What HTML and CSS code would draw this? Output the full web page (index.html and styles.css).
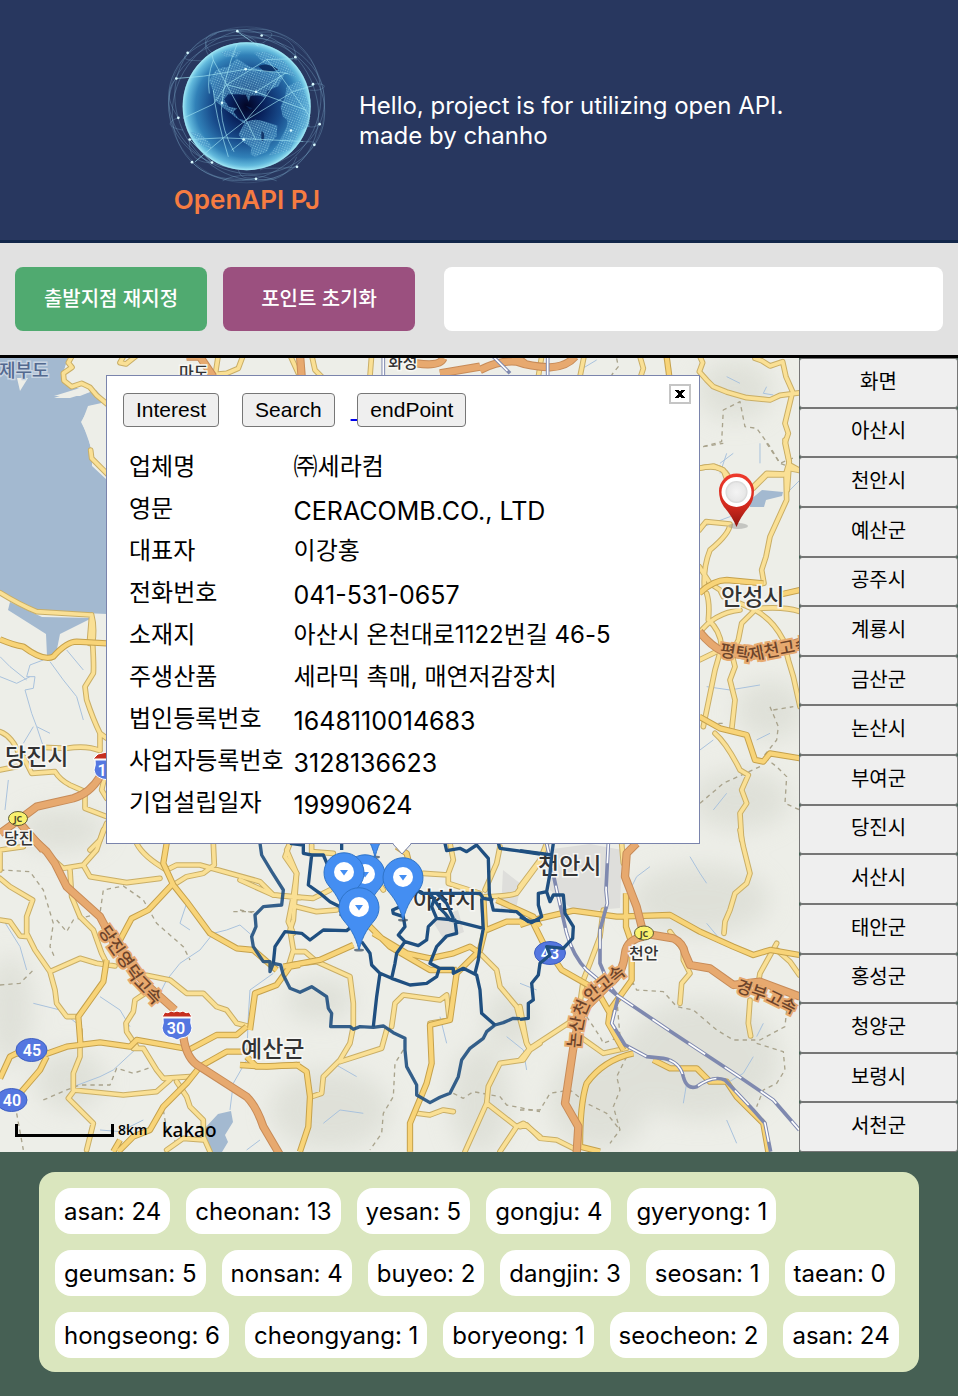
FILE: index.html
```html
<!DOCTYPE html>
<html lang="ko">
<head>
<meta charset="utf-8">
<meta name="viewport" content="width=device-width, initial-scale=1">
<title>OpenAPI PJ</title>
<link rel="stylesheet" href="styles.css">
</head>
<body>
<header class="hero">
  <div class="brand">
    <svg class="globe" viewBox="51 48 480 476" aria-hidden="true">
      <defs>
        <radialGradient id="ball" cx="0.5" cy="0.5" r="0.5">
          <stop offset="0" stop-color="#020423"/>
          <stop offset="0.25" stop-color="#08205a"/>
          <stop offset="0.55" stop-color="#184c8c"/>
          <stop offset="0.8" stop-color="#3181b8"/>
          <stop offset="0.93" stop-color="#62b9dc"/>
          <stop offset="1" stop-color="#9de4f3"/>
        </radialGradient>
        <pattern id="dots" width="7" height="7" patternUnits="userSpaceOnUse" patternTransform="rotate(20)">
          <rect width="7" height="7" fill="#4a96c8" fill-opacity="0.55"/>
          <circle cx="3" cy="3" r="1.8" fill="#a8e4f4" fill-opacity="0.7"/>
        </pattern>
      </defs>
      <g class="orbit">
        <circle cx="290" cy="284" r="234" stroke-opacity="0.25"/>
        <ellipse cx="290" cy="284" rx="212" ry="238" transform="rotate(40 290 284)"/>
        <ellipse cx="290" cy="284" rx="205" ry="236" transform="rotate(-35 290 284)"/>
        <ellipse cx="290" cy="284" rx="238" ry="204" transform="rotate(20 290 284)"/>
        <ellipse cx="285" cy="284" rx="196" ry="234" transform="rotate(85 290 284)"/>
        <path d="M188 130C140 90 175 55 262 63S360 60 365 70 340 96 325 108M200 70C150 90 165 130 190 150M262 63C300 80 320 90 325 105M335 75C400 70 440 100 436 141 445 150 440 155 425 140M112 128C90 150 110 152 185 152M78 205C50 240 50 270 85 323M488 222C540 215 530 245 480 240M510 342C480 360 470 345 462 340M493 404C500 392 480 396 460 394M440 470C380 478 340 470 330 480M126 456C170 500 220 512 318 506 380 520 420 490 440 440M119 388C112 440 150 460 186 457 200 445 180 430 170 420M265 480C275 510 290 500 318 506M85 323C60 330 40 350 100 360M218 512C250 490 330 490 380 512"/>
      </g>
      <circle cx="290" cy="288" r="192" fill="url(#ball)"/>
      <path fill="url(#dots)" d="M190 190Q205 170 235 170L260 145 300 170 380 188 402 196 385 228 352 242 346 262 330 256 302 256 296 275 288 254 262 252 234 252 222 268 236 290 262 294 250 305 266 326 288 332 284 340 262 326 240 308 222 295 196 272 188 240 178 212zM212 128Q240 114 272 124L262 142 225 138zM284 338Q310 322 344 334L382 346 380 378 362 398 352 424 316 440 302 432 304 412 278 394 266 372zM398 318L412 330 410 350 385 400 356 436 420 420 450 360 478 350 480 290 450 210 410 230 405 260 392 290zM312 128L350 125 400 150 440 200 400 190 340 158zM120 365L150 370 180 400 184 420 150 402z"/>
      <path fill="#082457" fill-opacity="0.8" d="M325 168Q350 155 385 178 360 190 340 182zM286 286l22 8-8 4zM312 302l20 2-8 4zM335 362q14 10 4 30-8 0-4-30z"/>
      <path class="web" d="M185 130L190 150 230 224 288 330 318 390M230 224L190 282 100 324M230 224L350 148 430 146M230 224L318 245 470 300M78 205L160 198 290 177 415 190M318 245L408 188M350 148L391 196 480 320M391 196L340 270 288 330 220 383 135 455M288 330L430 244 490 226M220 383L119 388M220 383L340 388 460 394M190 240Q195 310 235 440M262 100Q220 200 214 300 216 360 252 425M190 150Q170 200 178 250M262 64L325 108M119 388L186 457M285 388L245 420"/>
      <circle cx="290" cy="288" r="190" fill="none" stroke="#9be6f5" stroke-opacity="0.6" stroke-width="4"/>
      <g fill="#d9fbff">
        <circle cx="262" cy="63" r="4"/><circle cx="335" cy="76" r="4"/><circle cx="113" cy="128" r="4"/><circle cx="436" cy="141" r="4"/><circle cx="79" cy="205" r="4"/><circle cx="287" cy="177" r="4"/><circle cx="318" cy="245" r="4"/><circle cx="216" cy="278" r="4"/><circle cx="489" cy="222" r="4"/><circle cx="509" cy="342" r="4"/><circle cx="85" cy="323" r="4"/><circle cx="119" cy="388" r="4"/><circle cx="126" cy="456" r="4"/><circle cx="186" cy="457" r="4"/><circle cx="281" cy="388" r="4"/><circle cx="423" cy="361" r="4"/><circle cx="493" cy="404" r="4"/><circle cx="441" cy="470" r="4"/><circle cx="318" cy="506" r="4"/>
      </g>
    </svg>
    <strong class="brand-name">OpenAPI PJ</strong>
  </div>
  <p class="intro">Hello, project is for utilizing open API.<br>made by chanho</p>
</header>

<div class="toolbar">
  <button class="action action-start" type="button">출발지점 재지정</button>
  <button class="action action-reset" type="button">포인트 초기화</button>
  <input class="route-box" type="text" aria-label="경로 정보">
</div>

<main class="workspace">
  <section class="map" aria-label="지도">
    <svg class="map-canvas" viewBox="0 358 799 794" preserveAspectRatio="xMinYMin slice">
      <defs>
        <filter id="soft" x="-30%" y="-30%" width="160%" height="160%"><feGaussianBlur stdDeviation="12"/></filter>
        <radialGradient id="head"><stop offset="0" stop-color="#f4f4f4"/><stop offset="0.8" stop-color="#e8e8e8"/><stop offset="1" stop-color="#d4d4d4"/></radialGradient>
        <linearGradient id="red" x1="0" y1="0" x2="0" y2="1"><stop offset="0" stop-color="#ee3a2c"/><stop offset="0.6" stop-color="#d32a1e"/><stop offset="1" stop-color="#8f1610"/></linearGradient>

        <g id="minor">
          <path transform="translate(0 230) scale(.3333)" d="M215 380L205 398 216 412 190 430 192 452 215 470 245 460 270 472 290 496 325 525M272 660L275 685 330 740M370 380L360 398 378 402 412 375M655 375L645 440M730 375L715 415 680 430 655 432M870 375L895 430M935 375L945 420 965 440M1115 375L1110 440"/>
          <path transform="translate(480 230) scale(.3333)" d="M312 380L300 440M480 380L490 415 482 440M185 380L175 440M660 380L668 398 658 425 680 450 700 470 740 486 800 503 870 510 900 496 960 488M825 385L845 392 870 408 908 395 918 440 938 485 915 580 925 610 915 640 928 700 922 780M930 705L960 722M655 715L700 708 730 720 745 760M910 735L860 735 820 775"/>
          <path transform="translate(0 480) scale(.3333)" d="M0 338Q60 375 110 395L275 405 268 490M275 405Q285 440 278 490 282 560 280 580L255 620 260 660Q280 720 300 760L320 775M300 760L300 810M0 755Q40 770 60 830M130 802L200 805Q260 795 300 812M70 830L95 880 165 875Q180 900 210 915L255 935 255 985 320 1010M0 870L50 860M312 900L305 930 320 955M320 1030L300 1080 270 1110"/>
          <path transform="translate(660 440) scale(.3333)" d="M118 85Q185 70 205 110M375 0L388 65 378 100 380 180 330 290 318 350 305 390 312 430M385 85L420 92M380 102L320 100 275 145M118 270L138 245 210 252Q210 280 150 330 130 380 133 440M118 380L150 430 180 450 190 470M140 460Q150 490 145 540 180 570 185 620L165 690 130 860M118 580Q160 520 240 510M240 490L285 510 245 550 235 600 215 640 225 680 210 720 225 780 215 870M285 510Q340 540 370 600L385 660 400 710 420 800M300 505Q380 500 420 515M118 660L180 630M165 880Q200 910 240 990L265 1005 245 1050 260 1090 240 1120 245 1200"/>
          <path transform="translate(0 830) scale(.3333)" d="M0 145L30 170 98 210 80 260 80 310 105 360 150 425 165 480 170 520 200 560 235 560M0 270L30 275 60 318 85 320M0 60L70 50M310 0L290 60 250 105 190 115 150 80M250 105L270 140 380 158 480 145M210 120L215 200 240 260 280 300 305 370 320 400M150 425L240 385 290 400 345 408M410 40Q430 80 500 120L530 105 600 105 780 155 820 195 900 203M640 40L643 105 610 130 560 140 520 165M870 40L860 60 890 130 880 200 865 275 880 310M440 436L510 450 560 490 610 490 650 530 680 540 710 580 750 590M435 490L405 510 400 545 378 580 380 605 410 650M400 655L430 655 470 720 490 745 570 740M240 600L240 680 220 730 220 780 370 795 470 785 510 750M0 60L0 120M220 785L205 805 280 880 260 960M530 755L560 800 570 830 610 870 610 920 630 965M500 960L550 925 610 930"/>
          <path transform="translate(240 830) scale(.3333)" d="M150 40L135 80 170 130 165 200 160 270 150 300 160 360 145 410M0 150L100 195 220 205 270 180M170 230L230 245 290 240M215 45L215 65 280 70M160 365L195 365 230 395 330 440 340 520 340 590 330 640 300 690 250 740 245 790 215 800M145 405L230 395M440 600L425 655 300 695M455 590L465 520 490 495 600 510 620 495 628 570 570 580M630 40L640 90 625 130 625 160 720 190M550 130L625 135M780 50L770 100 735 180M735 200Q800 200 830 190L900 95M720 370L770 420 780 470 830 530 860 640 870 660 850 690 780 700 745 770 740 820 675 965M740 820L830 890 780 965M830 890L850 880 900 920M870 660L900 640M530 850L570 855 610 840 640 845M410 150L430 180"/>
          <path transform="translate(520 830) scale(.3333)" d="M0 170L30 130 60 90 80 40M660 0L670 50 690 130 680 160 645 190 630 240 615 275 612 310M250 240L240 320 210 400 190 450 180 520M0 690L30 655 160 570 200 530M0 530L20 640 30 655M180 620L250 670 320 655M450 305L490 360 490 390 510 430 485 460 480 520M770 340L720 430 715 460M690 510L685 580 692 618M770 360L810 395 838 435M0 890L20 885 60 925 110 930 170 960M305 40L310 100"/>
        </g>
        <g id="major">
          <path transform="translate(480 230) scale(.3333)" d="M560 380L568 440"/>
          <path transform="translate(0 480) scale(.3333)" d="M0 478Q40 495 70 500 130 545 160 530 200 485 230 485L320 490"/>
          <path transform="translate(660 440) scale(.3333)" d="M118 460Q160 420 200 420L310 430M355 465L420 450M118 830L180 865 260 885 285 960 310 965 330 940 420 955"/>
          <path transform="translate(0 830) scale(.3333)" d="M500 40L490 100 520 165 560 215 630 310 710 355 760 360 830 420M520 160L445 240 395 265 355 340M320 390L310 455 235 560 242 650M0 745L30 680 50 670 130 675 200 650 300 637 390 650 410 630 570 658 650 615 710 615 740 590M60 790L120 720 140 680M355 965L400 920 450 900 490 830 560 760 600 710 680 665 740 665M340 965L360 930M750 600L765 490 830 465 870 410 900 405M740 680L770 710 900 705"/>
          <path transform="translate(240 830) scale(.3333)" d="M0 705L80 710 170 705 200 725 210 800 205 890 180 965M130 410L240 390 340 345M400 310L500 370 570 385 640 370 690 350 720 370M380 280L450 350 570 420 650 420M730 200L735 300 720 360 650 430 630 570 570 585 575 700 560 760 510 880 510 965M740 300L800 275 870 275M770 210L880 260 900 290M470 50L500 70 510 110"/>
          <path transform="translate(520 830) scale(.3333)" d="M0 285L60 265 160 242 290 260 450 255 540 305 640 350 700 375 750 360 838 375M40 280L70 340 125 420 230 480 270 550M318 190L318 290 335 340 335 450 310 485 270 540 265 580 310 660M340 670Q250 690 200 760 180 820 180 950L240 965M400 690L450 715 530 715 570 755 620 755 650 800 730 880 745 965"/>
        </g>
        <g id="highway">
          <path transform="translate(0 230) scale(.3333)" d="M900 375L905 440M560 380L600 380 640 440M1250 400Q1320 410 1330 385M1320 430L1440 410"/>
          <path transform="translate(480 230) scale(.3333)" d="M0 420Q60 390 110 395 150 410 210 412 260 410 285 380M100 375L140 405"/>
          <path transform="translate(0 480) scale(.3333)" d="M300 890Q270 940 220 955L110 980 70 1010 0 1060M60 1030L130 1110"/>
          <path transform="translate(660 440) scale(.3333)" d="M118 575Q155 620 190 635L270 650 420 605"/>
          <path transform="translate(0 830) scale(.3333)" d="M70 0L140 65 165 100 200 170 300 260 345 345 430 455 525 540M550 620Q560 690 600 710L740 800Q770 830 790 890L840 975"/>
          <path transform="translate(520 830) scale(.3333)" d="M350 40L320 70 315 140 350 230 370 310Q430 320 460 325 490 340 495 370L510 405 570 415 640 465 720 455 840 500M370 320Q320 330 315 370 310 430 270 460L190 540 165 620 135 820 175 890 170 970"/>
        </g>
        <g id="rail">
          <path transform="translate(0 230) scale(.3333)" d="M1150 380L1150 440"/>
          <path transform="translate(480 230) scale(.3333)" d="M40 380L90 430M203 380L203 440"/>
          <path transform="translate(520 830) scale(.3333)" d="M80 40L110 180 140 310Q160 380 200 420L290 495 460 610 650 735 760 810 838 900M265 40L258 180 262 220 240 300 240 400 270 470 295 500 275 580 315 645 380 680 430 685Q480 695 490 740 500 780 530 770 580 735 615 750L700 840 735 880 752 965"/>
        </g>
        <path id="name-west" d="M98 931L135 985 160 1011"/>
        <path id="name-south" d="M580 1049Q582 1010 595 999L626 974"/>
        <path id="name-east" d="M735 991L770 1003 800 1018"/>
        <path id="name-north" d="M719 656L750 661 815 648"/>
        <g id="pin">
          <ellipse cx="0" cy="43" rx="5" ry="1.5" fill="#33475c" opacity="0.7"/>
          <path d="M0 43C-4 27-10 20-15 14A20 20 0 1 1 15 14C10 20 4 27 0 43z" fill="#448ef2" stroke="#2f74c8"/>
          <circle r="10" fill="#fff"/>
          <path d="M-4 -2H4L0 3.500z" fill="#448ef2"/>
        </g>
      </defs>

      <rect x="0" y="358" width="799" height="794" fill="#edeee8"/>
      <g filter="url(#soft)" fill="#d6d8cf" opacity="0.6">
        <ellipse cx="735" cy="390" rx="38" ry="30"/><ellipse cx="770" cy="710" rx="34" ry="30"/><ellipse cx="740" cy="800" rx="50" ry="30"/>
        <ellipse cx="10" cy="1010" rx="22" ry="55"/><ellipse cx="60" cy="830" rx="45" ry="22"/><ellipse cx="480" cy="1100" rx="30" ry="55"/>
        <ellipse cx="320" cy="1000" rx="35" ry="22"/><ellipse cx="700" cy="900" rx="70" ry="35"/><ellipse cx="700" cy="1060" rx="80" ry="60"/>
        <ellipse cx="600" cy="1100" rx="50" ry="50"/><ellipse cx="330" cy="1110" rx="60" ry="40"/><ellipse cx="510" cy="1020" rx="25" ry="30"/><ellipse cx="70" cy="1080" rx="35" ry="30"/>
      </g>
      <path fill="#dededb" d="M545 850L590 844 622 850 620 908 575 912 550 890zM503 870l18 14-6 30-14-4zM432 920l26-10 6 22-20 8z"/>

      <g fill="#a3b9d0">
        <path d="M0 358H68L64 372 80 388 54 396 80 396 100 388 106 402 88 406 82 422 92 450 92 466 107 480V614L60 612 38 612 0 592z"/>
        <path d="M10 602L42 617 92 618 60 634 56 654 47 656 46 634 8 610z"/>
        <path d="M750 500L762 490 783 492 782 496 766 500 764 507 750 507z"/>
        <path d="M218 1114L231 1111 233 1122 225 1135 228 1142 222 1152H208L205 1128z"/>
      </g>
      <path fill="#edeee8" d="M17 378L28 378 20 391zM68 358L62 376 64 384 80 389 54 398 70 398 96 390 107 402V358zM107 404L90 406 81 422 88 436 92 454 107 453z"/>

      <g class="stream">
        <path transform="translate(0 480) scale(.3333)" d="M130 540L90 555 80 590 105 590 100 625 75 630 95 700 110 740 150 760M150 545L190 600 230 650 250 720M0 530L30 560 80 600M100 740L70 790M0 590L50 610 90 590M200 510L250 570M110 740L130 800M25 900L15 990"/>
        <path transform="translate(0 830) scale(.3333)" d="M760 320L720 285 680 300 640 310 600 360 540 400 500 450 480 490M820 430L750 480 745 560 740 690 700 760 690 840M410 655L340 720 300 740 220 770M300 500L360 540 390 590M100 520L180 540 230 580M10 270L60 350 80 420M300 900L360 905 430 870M560 220L540 280 570 300"/>
        <path transform="translate(240 830) scale(.3333)" d="M250 880L300 840 370 850M800 620L850 660 860 720M280 700L350 740M600 560L620 640M20 960L60 930"/>
        <path transform="translate(520 830) scale(.3333)" d="M320 200L350 140 390 110M560 280L610 340M490 820L500 760M620 760L670 730 700 680M510 80L540 130 560 160M620 870L650 940M0 460L50 480M730 580L710 620"/>
        <path transform="translate(660 440) scale(.3333)" d="M270 180L210 230 130 260M380 160L420 120M200 40L180 100M140 740L210 750 300 735M160 1110L200 1060M290 900L330 880M120 930L160 900"/>
        <path transform="translate(480 230) scale(.3333)" d="M780 460L740 440M720 700L760 670M840 640L840 700M300 420L350 390M860 470L850 490 880 495"/>
      </g>
      <g class="border">
        <path transform="translate(0 830) scale(.3333)" d="M0 120L90 125 130 180 160 280 150 350 165 385M0 465L60 460 100 420M170 270L200 305 220 270 300 250 310 180 370 168 430 210 470 280 550 350 570 390M130 810L200 780 240 765 330 765 350 715 400 730 460 710M50 850L70 960M490 840L500 900 530 940M700 245L770 245"/>
        <path transform="translate(240 830) scale(.3333)" d="M490 660L465 700 460 800 430 850 425 910 390 960M640 790L670 805 700 785 780 800 800 825 900 845M0 240L50 250"/>
        <path transform="translate(520 830) scale(.3333)" d="M200 560L240 620 250 640 300 620 290 500 340 460 350 480 430 485 470 530 520 540 590 600 640 630 720 630 795 590 800 540M710 640L790 665 795 720 770 760 730 780 710 830M0 840L60 840 90 790 150 780 200 820 260 850 300 900M320 680L290 740 300 780 280 830 300 900 270 940"/>
        <path transform="translate(660 440) scale(.3333)" d="M330 800L355 860 350 900 310 950 350 980 380 1010 375 1090 420 1110M340 810L400 800M120 1090L190 1030 300 980M130 20L190 10M320 10L360 70 400 85M150 850L200 850"/>
        <path transform="translate(480 230) scale(.3333)" d="M670 650L725 635 730 540 780 515 795 590 830 595 870 650 900 700 950 680M410 385L415 410 395 435"/>
      </g>

      <use href="#minor" class="minor-case"/><use href="#minor" class="minor-fill"/>
      <use href="#major" class="major-case"/><use href="#major" class="major-fill"/>
      <use href="#highway" class="highway-case"/><use href="#highway" class="highway-fill"/>
      <use href="#rail" class="rail-case"/><use href="#rail" class="rail-fill"/>

      <g class="place">
        <text x="-1" y="377" class="sea">제부도</text>
        <text x="179" y="378" class="town">마도</text>
        <text x="388" y="368" class="town">화성</text>
        <text x="5" y="765" class="city">당진시</text>
        <text x="4" y="844" class="town">당진</text>
        <text x="721" y="605" class="city">안성시</text>
        <text x="241" y="1057" class="city">예산군</text>
        <text x="413" y="908" class="city">아산시</text>
        <text x="538" y="874" class="city">천안시</text>
        <text x="629" y="959" class="town">천안</text>
      </g>
      <g class="road-name">
        <text><textPath href="#name-west">당진영덕고속</textPath></text>
        <text><textPath href="#name-south">논산천안고속</textPath></text>
        <text><textPath href="#name-east">경부고속</textPath></text>
        <text><textPath href="#name-north">평택제천고속</textPath></text>
      </g>
      <g class="junction">
        <ellipse cx="18" cy="818.500" rx="9.500" ry="7"/><text x="18" y="822">JC</text>
        <ellipse cx="644" cy="933" rx="9.500" ry="7"/><text x="644" y="937">JC</text>
      </g>
      <g class="route">
        <ellipse cx="31.500" cy="1050" rx="15.500" ry="11.500"/><text x="32" y="1056">45</text>
        <ellipse cx="11.500" cy="1100" rx="15.500" ry="11.500"/><text x="12" y="1106">40</text>
        <ellipse cx="550" cy="953" rx="15.500" ry="11.500"/><text x="550" y="959">43</text>
      </g>
      <g class="shield">
        <path fill="#5577e0" stroke="#fff" d="M163 1018H191Q190 1023 192 1028 191 1037 181 1038L177 1040 173 1038Q163 1037 162 1028 164 1023 163 1018z"/>
        <path fill="#c62f20" stroke="#fff" d="M162 1017L165 1012Q168 1014 171 1011 174 1013 177 1011 180 1013 183 1011 186 1014 189 1012L192 1017z"/>
        <text x="176" y="1034">30</text>
        <path fill="#5577e0" stroke="#fff" d="M95 760H123Q122 765 124 770 123 779 109 780 95 779 94 770 96 765 95 760z"/>
        <path fill="#c62f20" stroke="#fff" d="M93 759L98 754 107 752V759z"/>
        <text x="102" y="776">1</text>
      </g>

      <g class="district">
        <path transform="translate(240 830) scale(.3333)" opacity="0.9" d="M60 40L65 75 95 125 130 180 125 225 70 230 45 255 48 290 35 320 40 350 70 395 90 395 90 425 100 400 122 405 130 435 150 475 180 487 215 470 260 500 265 535 275 550 272 590 330 590 340 598 360 590 400 592 430 588 460 608 495 625 495 660 500 710 530 765 530 795 570 818 600 802 630 790 655 740 665 690 690 655 730 625 740 605 765 585 790 578 820 565 840 566"/>
        <path transform="translate(240 830) scale(.3333)" d="M100 400L105 350 135 305 185 310 210 330 250 300 320 302 335 290M190 40L190 70 215 75 205 165 240 190 270 215 300 230M215 75L250 75 265 110 300 120M150 40L190 45M305 40L305 60M365 335L390 370 395 405 420 430 455 445 510 465 560 460 590 440 598 415 570 400 590 350 620 318 650 310 645 270 590 265 565 290 560 330 535 347 495 335 475 315 495 290 490 260 460 250 458 240 480 230M420 430L410 500 400 590M455 445L465 400 470 370 495 335M530 180L545 190 570 190 720 190 730 205 760 210M570 190L600 235 615 250 630 270 730 295 720 350 715 390 705 430M590 190L620 220 640 265M590 265L575 230 585 200M725 205L730 300M598 415L640 415 640 430 670 415 710 435 720 480 725 550 765 585M615 40L620 62 660 55 680 65 710 45 745 85 748 190 760 240 830 245 865 275 900 270M775 40L780 55 830 62 900 72"/>
        <path transform="translate(520 830) scale(.3333)" d="M0 62L95 75 100 40M95 75L90 130 80 185 55 190 55 225 65 260 35 278 0 260M80 185L90 215 100 195 130 195 135 250 160 290 158 325 130 355 80 350 90 375 60 400 55 435 35 460 40 510 25 520 25 565 0 568"/>
      </g>

      <use href="#pin" x="375" y="814"/>
      <use href="#pin" x="365" y="874"/>
      <use href="#pin" x="344" y="872"/>
      <use href="#pin" x="403" y="877"/>
      <use href="#pin" x="359" y="907"/>
      <g>
        <ellipse cx="738" cy="526" rx="10" ry="3" fill="#888" opacity="0.4"/>
        <path d="M736.500 527Q732 516 724 507 719 500 719 491A17.500 17.500 0 0 1 754 491Q754 500 749 507 741 516 736.500 527z" fill="url(#red)"/>
        <circle cx="736.500" cy="492" r="15" fill="#fff"/><circle cx="736.500" cy="492" r="11" fill="url(#head)"/>
      </g>

      <path d="M16.500 1124V1135.500H112.500V1124" fill="none" stroke="#000" stroke-width="3"/>
      <text class="scale-text" x="118" y="1135">8km</text>
      <text class="kakao" x="162" y="1137">kakao</text>
    </svg>

    <article class="info">
      <button class="info-close" type="button" aria-label="닫기"><svg viewBox="0 0 10 8" aria-hidden="true"><path d="M0 0H4V1H6V0H10V1H9V2H8V3H7V5H8V6H9V7H10V8H6V7H4V8H0V7H1V6H2V5H3V3H2V2H1V1H0z"/></svg></button>
      <div class="info-actions">
        <button class="small-button" type="button">Interest</button>
        <button class="small-button" type="button">Search</button>
        <a class="end-link" href="#end"><span class="end-mark">&nbsp;</span><button class="small-button" type="button">endPoint</button></a>
      </div>
      <table class="company">
        <tbody>
          <tr><th scope="row">업체명</th><td>㈜세라컴</td></tr>
          <tr><th scope="row">영문</th><td class="latin">CERACOMB.CO., LTD</td></tr>
          <tr><th scope="row">대표자</th><td>이강홍</td></tr>
          <tr><th scope="row">전화번호</th><td class="latin">041-531-0657</td></tr>
          <tr><th scope="row">소재지</th><td>아산시 온천대로1122번길 46-5</td></tr>
          <tr><th scope="row">주생산품</th><td>세라믹 촉매, 매연저감장치</td></tr>
          <tr><th scope="row">법인등록번호</th><td class="latin">1648110014683</td></tr>
          <tr><th scope="row">사업자등록번호</th><td class="latin">3128136623</td></tr>
          <tr><th scope="row">기업설립일자</th><td class="latin">19990624</td></tr>
        </tbody>
      </table>
      <svg class="info-tail" viewBox="0 0 18 12" aria-hidden="true"><path d="M0 0H18L9 11z" fill="#fff"/><path d="M0 1L9 11 18 1" fill="none" stroke="#7a84ac"/></svg>
    </article>
  </section>

  <nav class="regions" aria-label="지역">
    <button type="button">화면</button>
    <button type="button">아산시</button>
    <button type="button">천안시</button>
    <button type="button">예산군</button>
    <button type="button">공주시</button>
    <button type="button">계룡시</button>
    <button type="button">금산군</button>
    <button type="button">논산시</button>
    <button type="button">부여군</button>
    <button type="button">당진시</button>
    <button type="button">서산시</button>
    <button type="button">태안군</button>
    <button type="button">홍성군</button>
    <button type="button">청양군</button>
    <button type="button">보령시</button>
    <button type="button">서천군</button>
  </nav>
</main>

<footer class="summary">
  <ul class="counts">
    <li>asan: 24</li>
    <li>cheonan: 13</li>
    <li>yesan: 5</li>
    <li>gongju: 4</li>
    <li>gyeryong: 1</li>
    <li>geumsan: 5</li>
    <li>nonsan: 4</li>
    <li>buyeo: 2</li>
    <li>dangjin: 3</li>
    <li>seosan: 1</li>
    <li>taean: 0</li>
    <li>hongseong: 6</li>
    <li>cheongyang: 1</li>
    <li>boryeong: 1</li>
    <li>seocheon: 2</li>
    <li>asan: 24</li>
  </ul>
</footer>
</body>
</html>
```
FILE: styles.css
```css
* { box-sizing: border-box; }

body {
  margin: 0;
  background: #466054;
  color: #000;
  font-family: Inter, "Noto Sans CJK KR", sans-serif;
  font-size: 24px;
  line-height: 30px;
}

button { font-family: inherit; }

.hero {
  display: flex;
  align-items: center;
  justify-content: center;
  gap: 32px;
  padding: 26px 16px 25px;
  background: #28375f;
  border-bottom: 3px solid #12264a;
  color: #fff;
}

.brand {
  display: flex;
  flex-direction: column;
  align-items: center;
}

.globe { display: block; width: 160px; height: 159px; }
.orbit { fill: none; stroke: #84b6d4; stroke-width: 2; stroke-opacity: 0.45; }
.web { fill: none; stroke: #9fe3f2; stroke-width: 3; stroke-opacity: 0.65; }

.brand-name { color: #f67c41; font-size: 26px; font-weight: 600; }

.intro { flex: 0 1 432px; margin: 0; }

.toolbar {
  display: flex;
  gap: 16px;
  padding: 24px 15px;
  background: #e1e1e1;
  border-bottom: 3px solid #000;
}

.action {
  width: 192px;
  height: 64px;
  padding: 0 0 4px;
  border: 0;
  border-radius: 8px;
  color: #fff;
  font-size: 20px;
  font-weight: 500;
}

.action-start { background: #50aa70; }
.action-reset { background: #9b507f; }

.route-box {
  flex: 1;
  min-width: 0;
  height: 64px;
  margin-left: 13px;
  padding: 0 16px;
  border: 0;
  border-radius: 8px;
  background: #fff;
  font: inherit;
}

.workspace {
  display: grid;
  grid-template-columns: minmax(0, 1fr) 159px;
  min-height: 794px;
}

.map { position: relative; overflow: hidden; }
.map-canvas { position: absolute; inset: 0; width: 100%; height: 100%; }

.minor-case, .minor-fill, .major-case, .major-fill,
.highway-case, .highway-fill, .rail-case, .rail-fill,
.stream, .border, .district {
  fill: none;
  stroke-linejoin: round;
}

.minor-case { stroke: #c9ae66; stroke-width: 17px; stroke-linecap: round; }
.minor-fill { stroke: #fae095; stroke-width: 11px; stroke-linecap: round; }
.major-case { stroke: #c5a14c; stroke-width: 19px; }
.major-fill { stroke: #f8d478; stroke-width: 13px; }
.highway-case { stroke: #c78b58; stroke-width: 25px; }
.highway-fill { stroke: #e7a96f; stroke-width: 19px; }
.rail-case { stroke: #7f89af; stroke-width: 11px; }
.rail-fill { stroke: #fff; stroke-width: 5px; stroke-dasharray: 60px 70px; }
.stream { stroke: #a9c2dd; stroke-width: 3px; }
.border { stroke: #a9a38c; stroke-width: 4px; stroke-dasharray: 13px 12px; }
.district { stroke: #1f4f80; stroke-width: 10px; }

.place text {
  fill: #333;
  stroke: #f7f7f4;
  stroke-width: 3px;
  paint-order: stroke;
  font-weight: 500;
}

.place .city { font-size: 23px; }
.place .town { font-size: 16px; }
.place .sea { font-size: 18px; fill: #53698f; stroke: #c9d5e3; }

.road-name text {
  fill: #6d442a;
  stroke: #e7a96f;
  stroke-width: 4px;
  paint-order: stroke;
  font-size: 17px;
  font-weight: 500;
}

.junction ellipse { fill: #f9f16e; stroke: #5d5b35; }
.junction text { fill: #4c4a2c; font: 700 9px "Open Sans", sans-serif; text-anchor: middle; }
.route ellipse { fill: #5577e0; stroke: #3e5fc0; }
.route text, .shield text { fill: #fff; font: 600 16px Roboto, sans-serif; text-anchor: middle; }
.scale-text { font: 600 14px "Open Sans", sans-serif; }
.kakao { font: 500 19px "Noto Sans", sans-serif; }

.info {
  position: absolute;
  top: 17px;
  left: 106px;
  width: 594px;
  padding: 17px 16px 19px;
  border: 1px solid #7a84ac;
  background: #fff;
}

.info-close {
  position: absolute;
  top: 8px;
  right: 8px;
  display: grid;
  place-items: center;
  width: 22px;
  height: 20px;
  padding: 0;
  border: 2px solid #c5c5c5;
  background: #fff;
}

.info-close svg { width: 10px; height: 8px; }

.info-actions { display: flex; gap: 23px; }

.small-button {
  height: 34px;
  padding: 0 12px;
  border: 1px solid #767676;
  border-radius: 4px;
  background: #efefef;
  color: #000;
  font: 21px "Liberation Sans", Arial, sans-serif;
}

.end-link {
  display: flex;
  align-items: center;
  margin-left: -7px;
  color: #0000ee;
  text-decoration: none;
}

.end-mark { text-decoration: underline 2px; }

.company {
  margin-top: 19px;
  margin-left: 4px;
  border-spacing: 2px 0;
}

.company th, .company td {
  height: 42px;
  padding: 0;
  font-weight: 400;
  text-align: left;
  vertical-align: middle;
  white-space: nowrap;
}

.company th { padding-right: 8px; }
.company .latin { padding-top: 3px; font-size: 25px; }

.info-tail {
  position: absolute;
  top: 100%;
  left: 50%;
  width: 18px;
  height: 12px;
  margin-left: -10px;
}

.regions { display: grid; grid-auto-rows: 1fr; }

.regions button {
  padding: 0 0 2px;
  border: 1px solid #767676;
  border-radius: 3px;
  background: #efefef;
  color: #000;
  font-size: 20px;
  line-height: 24px;
}

.summary { padding: 20px 39px 24px; }

.counts {
  display: flex;
  flex-wrap: wrap;
  gap: 16px;
  margin: 0;
  padding: 16px 12px 14px 16px;
  border-radius: 16px;
  background: #dae6be;
  list-style: none;
}

.counts li {
  padding: 9px 9px 7px;
  border-radius: 16px;
  background: #fff;
}
```
